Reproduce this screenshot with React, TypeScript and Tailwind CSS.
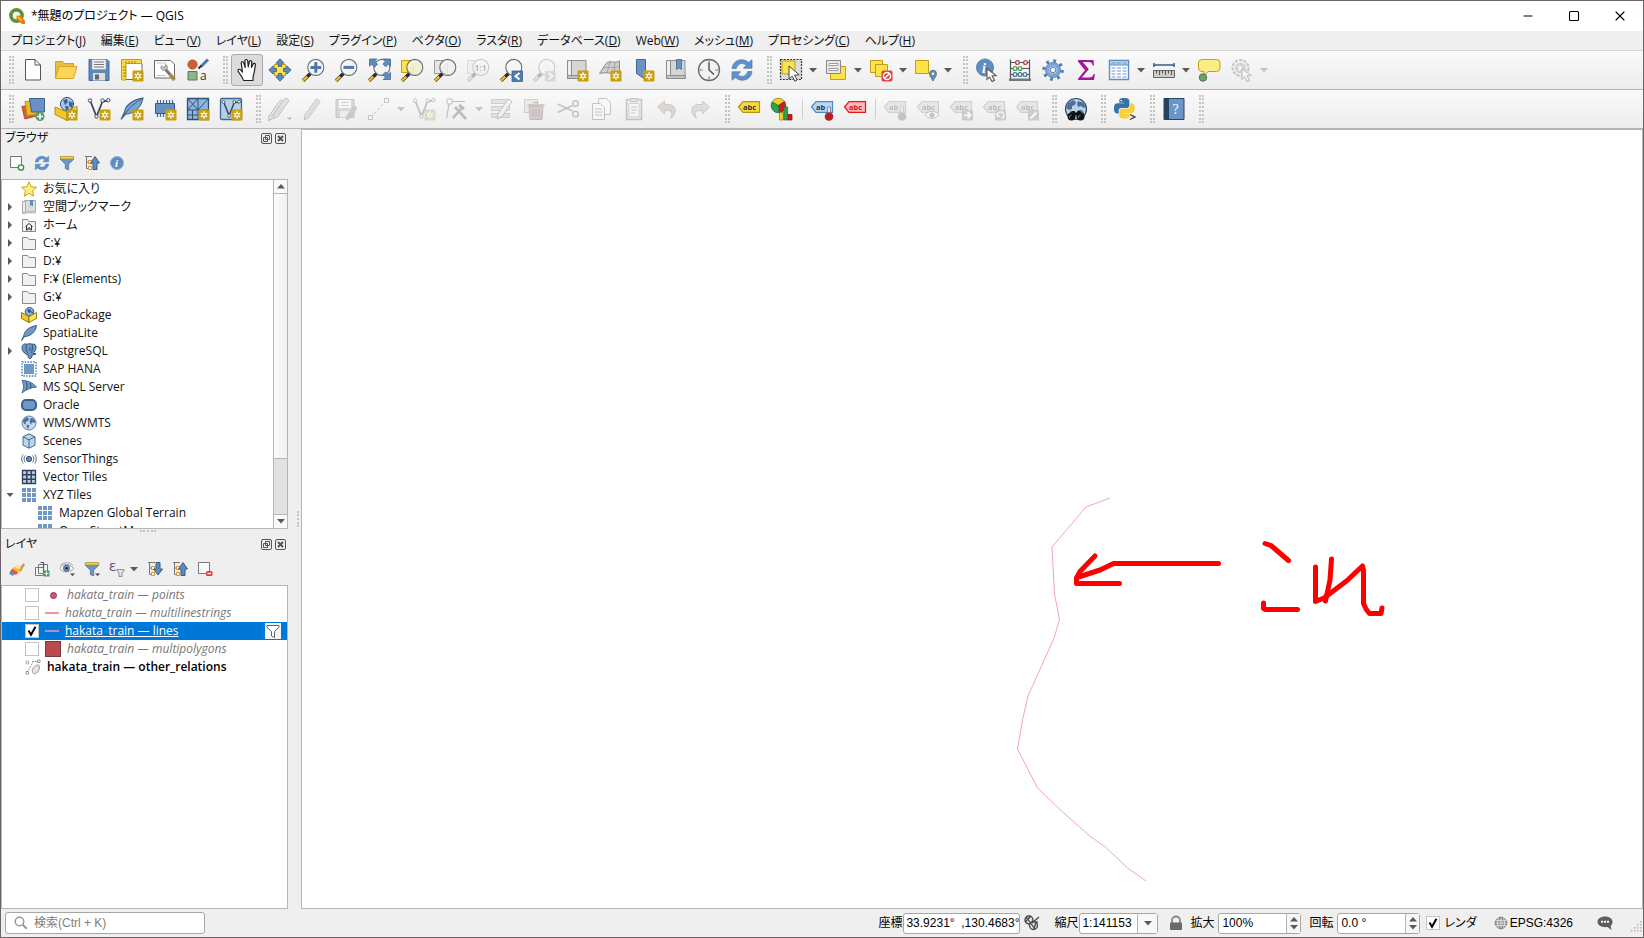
import { useState, type ReactNode } from "react";
import { Minus, Square, X } from "lucide-react";

const menus = [
  { text: "プロジェクト", key: "J" },
  { text: "編集", key: "E" },
  { text: "ビュー", key: "V" },
  { text: "レイヤ", key: "L" },
  { text: "設定", key: "S" },
  { text: "プラグイン", key: "P" },
  { text: "ベクタ", key: "O" },
  { text: "ラスタ", key: "R" },
  { text: "データベース", key: "D" },
  { text: "Web", key: "W" },
  { text: "メッシュ", key: "M" },
  { text: "プロセシング", key: "C" },
  { text: "ヘルプ", key: "H" },
];

/* ---------- shared icon parts ---------- */

function Svg({ children, size = 24 }: { children: ReactNode; size?: 16 | 24 }) {
  return (
    <svg
      viewBox={size === 24 ? "0 0 24 24" : "0 0 16 16"}
      className={size === 24 ? "size-6 shrink-0" : "size-4 shrink-0"}
      fill="none"
      aria-hidden="true"
    >
      {children}
    </svg>
  );
}

// Golden "new" badge in the bottom right corner
function NewBadge() {
  return (
    <g>
      <rect x="12.5" y="12.5" width="11" height="11" rx="1.2" fill="#c9a00c" />
      <path d="M18 14.3v7.4M14.8 16.1l6.4 3.8M21.2 16.1l-6.4 3.8" stroke="#fff" strokeWidth="1.4" />
      <circle cx="18" cy="18" r="1.1" fill="#c9a00c" />
    </g>
  );
}

function Lens({ children, tone = "#f2f4f4" }: { children?: ReactNode; tone?: string }) {
  return (
    <g>
      <path d="M9.5 15.5 2 22.8" stroke="#2b2b2b" strokeWidth="3.4" />
      <path d="M6.2 18.6 1.6 23" stroke="#f3bd33" strokeWidth="2.4" />
      <circle cx="14.8" cy="9.4" r="8" fill={tone} fillOpacity=".88" stroke="#6d6f6e" strokeWidth="1.1" />
      <path d="M9.2 9.4a5.6 5.6 0 0 1 5.6-5.6" stroke="#fff" strokeWidth="1.2" />
      {children}
    </g>
  );
}

function Refresh() {
  return (
    <g>
      <path d="M2 10.5C2.6 4.6 7.6 1.4 12.4 1.8c2.6.2 4.7 1.2 6.1 2.7L22 1.8v8.4h-8.6l2.8-2.9c-3.4-3-8.2-2.2-10 3.2z" fill="#5f92cd" stroke="#4778ad" strokeWidth=".7" />
      <path d="M22 13.5c-.6 5.9-5.6 9.1-10.4 8.7-2.6-.2-4.7-1.2-6.1-2.7L2 22.2v-8.4h8.6l-2.8 2.9c3.4 3 8.2 2.2 10-3.2z" fill="#5f92cd" stroke="#4778ad" strokeWidth=".7" />
    </g>
  );
}

function Cursor() {
  return <path d="M12 10.5v10.8l2.6-2.3 2.5 4.6 2.4-1.3-2.4-4.4 3.9-.3z" fill="#fff" stroke="#555" strokeWidth="1.1" />;
}

function Tag({ fill, stroke, text, color = "#333" }: { fill: string; stroke: string; text: string; color?: string }) {
  return (
    <g>
      <path d="M1.5 10 6 4.7h16.5v10.6H6z" fill={fill} stroke={stroke} strokeWidth="1.2" />
      <text x="6" y="12.6" fontSize="7.5" fontWeight="700" fontFamily="Open Sans, sans-serif" fill={color}>
        {text}
      </text>
    </g>
  );
}

function Globe() {
  return (
    <g>
      <circle cx="12" cy="12" r="10.5" fill="#b9d2ea" stroke="#2f4a66" strokeWidth="1.2" />
      <path d="M4 6.5 9 3l3 2-1 3-3 1v3l-3 1-2.6-2zM14 4l5 1.5 3 4.5-2 1-3-2-3 1-1-3zM6 14l4 1 1 3-2 4-3-3zM14 13l4 0 2 3-3 5-3-2z" fill="#4c7097" />
    </g>
  );
}

function VectorNodes({ stroke = "#3b4b5c" }: { stroke?: string }) {
  return (
    <g stroke={stroke}>
      <path d="m3.5 4.5 6 15 6-15 5.5-1" strokeWidth="1.8" />
      <circle cx="3" cy="3.5" r="1.7" fill="#fff" strokeWidth="1" />
      <circle cx="15.5" cy="3.5" r="1.7" fill="#fff" strokeWidth="1" />
      <circle cx="21.3" cy="3.2" r="1.7" fill="#fff" strokeWidth="1" />
      <circle cx="9.5" cy="19.5" r="1.7" fill="#fff" strokeWidth="1" />
    </g>
  );
}

function Feather() {
  return (
    <g>
      <path d="M23 1C13 2.5 5.5 8 4.5 15L1 22.5l4.3-5.2C14 16.5 21 11 23 1z" fill="#7ba4d0" stroke="#3d5d80" strokeWidth="1.1" />
      <path d="M2 21C8 11.500 15 5.500 23 1" stroke="#3d5d80" />
    </g>
  );
}

function Pencil() {
  return (
    <g>
      <path d="M4 18 15.500 1.800l3.700 2.600L7.700 20.600 3.300 22.700z" fill="#d8c99a" stroke="#444" strokeWidth="1" />
      <path d="m6 19.300 11.400-16.200" stroke="#8a8364" />
    </g>
  );
}

function GreyMap() {
  return (
    <g>
      <path d="M5.500 2.500H21v18H5.500z" fill="#d6d6d6" stroke="#8d8d8d" />
      <path d="M2.500 2.500h4v18h-4z" fill="#efefef" stroke="#8d8d8d" />
      <path d="M2.500 17.500h19v3h-19z" fill="#c3c3c3" stroke="#8d8d8d" />
    </g>
  );
}

function Ribbon() {
  return <path d="M5.500 1.500h9v20l-4.500-3-4.500-3z" fill="#6a94c4" stroke="#3f6690" />;
}

function Scissors() {
  return (
    <g stroke="#555" strokeWidth="1.500">
      <path d="m1.500 7 15 7M1.500 15.500l15-7" />
      <circle cx="19.500" cy="6.500" r="2.800" />
      <circle cx="19.500" cy="17" r="2.800" />
    </g>
  );
}

function Funnel16() {
  return (
    <g>
      <path d="M1.500 2h13v2.600L9.700 9v6l-3.400-1.500V9L1.500 4.600z" fill="#6c96c5" stroke="#50779f" strokeWidth=".8" />
      <path d="M1.300 1.500h13.400v2.400H1.300z" fill="#f6d93b" stroke="#a48d2a" strokeWidth=".6" />
    </g>
  );
}

function TreeArrow16({ down = false }: { down?: boolean }) {
  return (
    <g>
      <path d="M1 1.500h7M2.500 1.500v12h4M2.500 7h4" stroke="#777" />
      <path d="M4.500 5.500h3v3h-3zM4.500 11.500h3v3h-3z" fill="#fff" stroke="#e98b1d" />
      {down ? (
        <path d="M9 1.500h4V8h2.500L11 14 6.500 8H9z" fill="#5d8cc0" stroke="#385b82" />
      ) : (
        <path d="M9 14.500h4V8h2.500L11 1.500 6.500 8H9z" fill="#5d8cc0" stroke="#385b82" />
      )}
    </g>
  );
}

function Folder16() {
  return <path d="M1.500 2.500h5l1.500 2h6.500v10h-13z" fill="#f1f1f1" stroke="#8a8a8a" />;
}

function TileGrid16() {
  return (
    <path
      d="M1 1h4v4H1zM6 1h4v4H6zM11 1h4v4h-4zM1 6h4v4H1zM6 6h4v4H6zM11 6h4v4h-4zM1 11h4v4H1zM6 11h4v4H6zM11 11h4v4h-4z"
      fill="#6d98c8"
    />
  );
}

/* ---------- toolbars ---------- */

function Handle() {
  return (
    <span className="flex w-4 shrink-0 justify-center gap-px pl-1" aria-hidden="true">
      <span className="h-7 border-l-2 border-dotted border-[#c3c3c3]" />
      <span className="h-7 border-l-2 border-dotted border-[#c3c3c3]" />
    </span>
  );
}

function Divider() {
  return (
    <span className="flex w-[7px] shrink-0 justify-center">
      <span className="h-5 w-px bg-[#cfcfcf]" />
    </span>
  );
}

function Caret() {
  return (
    <svg viewBox="0 0 8 5" className="h-[5px] w-2 shrink-0" aria-hidden="true">
      <path d="M0 0h8L4 4.500z" fill="#5a5a5a" />
    </svg>
  );
}

interface ToolProps {
  label: string;
  children: ReactNode;
  menu?: boolean;
  off?: boolean;
  active?: boolean;
}

function Tool({ label, children, menu, off, active }: ToolProps) {
  return (
    <button
      type="button"
      title={label}
      aria-label={label}
      disabled={off}
      className={`mr-px flex h-8 shrink-0 items-center rounded-[3px] border pl-[3px] ${menu ? "w-11 gap-1.5" : "w-8"} ${
        active ? "border-[#a9a9a9] bg-[#dcdcdc]" : "border-transparent"
      } ${off ? "opacity-30 grayscale-[60%]" : ""}`}
    >
      <Svg>{children}</Svg>
      {menu && <Caret />}
    </button>
  );
}

function MainToolbar() {
  return (
    <div className="flex h-[39px] items-center overflow-hidden border-b border-[#b5b5b5] bg-linear-to-b from-[#fafafa] to-[#ededed]">
      <Handle />
      <Tool label="新規プロジェクト">
        <path d="M4.500 1.500h9.500l5.500 5.500v15h-15z" fill="#fff" stroke="#555" />
        <path d="M14 1.500V7h5.500" stroke="#555" />
      </Tool>
      <Tool label="開く">
        <path d="M1.500 20.500v-17h7l2 2h9v3" fill="#e6bf3c" stroke="#cda125" />
        <path d="m1.500 20.500 3.500-12h18l-3.500 12z" fill="#fcd456" stroke="#d6a92d" />
      </Tool>
      <Tool label="保存">
        <path d="M2 1.500h18l2 2v19H2z" fill="#5f89b8" stroke="#466b94" />
        <path d="M5 1.500h14v10H5z" fill="#f2f2f2" stroke="#8c9aa8" strokeWidth=".6" />
        <path d="M7 4h10M7 6.500h10M7 9h10" stroke="#777" />
        <path d="M6 15h12v7.500H6z" fill="#dedede" />
        <path d="M8 16.500h4v5H8z" fill="#666" />
      </Tool>
      <Tool label="新規プリントレイアウト">
        <path d="M5 1.500h12.500l4.500 4v16H5z" fill="#fff" stroke="#666" />
        <path d="M1.500 1.500h20v4H6v16.500H1.500z" fill="#f8d848" stroke="#c39d19" />
        <path d="M6 5.500V3M9 5.500V3M12 5.500V3M15 5.500V3M3 9h3M3 12h3M3 15h3M3 18h3" stroke="#8e7311" strokeWidth=".8" />
        <NewBadge />
      </Tool>
      <Tool label="レイアウトマネージャ">
        <path d="M1.500 2.500h16l4 3.500v14h-20z" fill="#fff" stroke="#666" />
        <path d="M3.500 5h10M3.500 17.500h9" stroke="#c4c4c4" />
        <path d="M17 16.500 21.500 22" stroke="#a98b46" strokeWidth="3.600" />
        <path d="m11 9.500 6 7" stroke="#777" strokeWidth="3" />
        <path d="M8 9.500c0 2.400 3 3.600 5 2.300 1.800-1.200 1.800-4-.3-5.300l-.7 2.700-2 .2-1.600-1.600z" fill="#ccc" stroke="#777" strokeWidth=".8" />
      </Tool>
      <Tool label="スタイルマネージャ">
        <circle cx="6.500" cy="6.500" r="4.600" fill="#d1603a" stroke="#a5431f" strokeWidth=".8" />
        <path d="M22 1.500 15 8.500" stroke="#4a78ab" strokeWidth="3" />
        <path d="M15.500 7.500 12.500 10.500" stroke="#2b2b2b" strokeWidth="2" />
        <path d="M2 13.500h9v8.500H2z" fill="#8fb58d" stroke="#4f7f4d" />
        <text x="14" y="22" fontSize="12" fontFamily="Open Sans, sans-serif" fill="#333">a</text>
      </Tool>
      <Handle />
      <Tool label="地図を移動" active>
        <path
          d="M8.500 22.500c-.5-2.500-2.500-5-4-7-.8-1.200-2.200-3-1.300-3.900 1-1 2.500.2 4.300 2.400L6.300 5.500c-.3-2 2-2.400 2.500-.6L10.200 9.500 9.900 3c0-2 2.500-2 2.800-.1l.6 6 1-5.300c.4-1.700 2.600-1.300 2.500.5L16.500 9.500l1.500-3.300c.7-1.600 2.800-.8 2.400 1-.7 3.300-1 7.300-2 10.300-.5 1.500-.4 3-.4 5z"
          fill="#fff"
          stroke="#222"
          strokeWidth="1.200"
          strokeLinejoin="round"
        />
      </Tool>
      <Tool label="選択部分に地図を移動">
        <path d="M6.500 6.500h11v11h-11z" fill="#fbe34b" stroke="#c39d19" />
        <path
          d="m12 .800 4.200 4.400h-2.600v3.300h-3.200V5.200H7.800zM12 23.200l4.200-4.400h-2.600v-3.300h-3.200v3.300H7.800zM.800 12l4.400-4.200v2.600h3.300v3.200H5.200v2.600zM23.200 12l-4.400-4.200v2.600h-3.300v3.200h3.300v2.600z"
          fill="#5d8cc0"
          stroke="#385b82"
          strokeWidth=".8"
        />
      </Tool>
      <Tool label="拡大">
        <Lens><path d="M14.800 4v10.800M9.400 9.400h10.800" stroke="#4b79ae" strokeWidth="3" /></Lens>
      </Tool>
      <Tool label="縮小">
        <Lens><path d="M9.400 9.400h10.800" stroke="#4b79ae" strokeWidth="3" /></Lens>
      </Tool>
      <Tool label="全域表示">
        <Lens />
        <path
          d="M2.500 1h7.300L7.600 3.200l3 3-3 3-3-3-2.100 2.100zM23.500 1v7.300l-2.200-2.200-2.600 2.600-2.800-2.800 2.600-2.600L16.200 1zM23.500 21.500h-7.300l2.200-2.200-2.600-2.600 2.800-2.800 2.600 2.600 2.300-2.200z"
          fill="#5d8cc0"
          stroke="#385b82"
          strokeWidth=".7"
        />
      </Tool>
      <Tool label="選択部分にズーム">
        <path d="M1.500 2.500h12v12h-12z" fill="#fbe34b" stroke="#c39d19" />
        <Lens tone="#f3eed2" />
      </Tool>
      <Tool label="レイヤの領域にズーム">
        <path d="M1.500 2.500h13v13h-13z" fill="#e6e6e6" stroke="#9a9a9a" />
        <Lens tone="#eee" />
      </Tool>
      <Tool label="ネイティブ解像度にズーム" off>
        <path d="M1.500 2.500h13v13h-13z" fill="#e6e6e6" stroke="#9a9a9a" />
        <Lens>
          <text x="8.500" y="12.500" fontSize="8.500" fontWeight="700" fontFamily="Open Sans, sans-serif" fill="#333">1:1</text>
        </Lens>
      </Tool>
      <Tool label="直前の表示領域にズーム">
        <Lens />
        <path d="M13 13h10.500v10.500H13z" fill="#4f7db1" stroke="#34587f" strokeWidth=".7" />
        <path d="m20.500 15-4 3.200 4 3.200" stroke="#fff" strokeWidth="2" />
      </Tool>
      <Tool label="次の表示領域にズーム" off>
        <Lens />
        <path d="M13 13h10.500v10.500H13z" fill="#9b9b9b" />
        <path d="m16.500 15 4 3.200-4 3.200" stroke="#fff" strokeWidth="2" />
      </Tool>
      <Tool label="新規地図ビュー"><GreyMap /><NewBadge /></Tool>
      <Tool label="新規3D地図ビュー">
        <path d="M1.500 15.500 8.500 5c4-3 8 1 13-2v12c-5 3-10-2-20 .5z" fill="#cfcfcf" stroke="#8d8d8d" />
        <path d="M5 10.500c5-3 10 1 16-2M12 3.700 9 15M17 4.500l-1 11" stroke="#999" strokeWidth=".8" />
        <NewBadge />
      </Tool>
      <Tool label="新規空間ブックマーク"><Ribbon /><NewBadge /></Tool>
      <Tool label="空間ブックマークを表示">
        <GreyMap />
        <path d="M12.500 1.500h5v10L15 9.800l-2.500 1.700z" fill="#6a94c4" stroke="#3f6690" strokeWidth=".8" />
      </Tool>
      <Tool label="時系列コントローラ">
        <circle cx="12" cy="12" r="10.500" fill="#f2f2f2" stroke="#6b6b6b" strokeWidth="1.300" />
        <path d="M12 2.500v3M12 18.500v3M2.500 12h3M18.500 12h3" stroke="#6b6b6b" />
        <path d="M12 5v7l5 4.500" stroke="#4d4d4d" strokeWidth="1.400" />
      </Tool>
      <Tool label="再読み込み"><Refresh /></Tool>
      <Handle />
      <Tool label="地物を選択" menu>
        <path d="M1.500 1.500h21v20h-21z" fill="#dcdcdc" stroke="#333" strokeDasharray="2 1.200" strokeWidth="1.200" />
        <path d="M3 3h13v13H3z" fill="#fbe34b" stroke="#c39d19" />
        <path d="M10 8v13l3.200-2.800 2.600 5 2.300-1.200-2.500-4.800 4.600-.4z" fill="#fff" stroke="#444" />
      </Tool>
      <Tool label="値で地物を選択" menu>
        <path d="M6.500 8.500h15v13h-15z" fill="#fbe34b" stroke="#c39d19" />
        <path d="M2.500 2.500h14v13h-14z" fill="#e9e9e9" stroke="#888" />
        <path d="M5 5.500h9v2H5zM5 10.500h9v2H5z" fill="#fff" stroke="#888" strokeWidth=".8" />
      </Tool>
      <Tool label="選択解除" menu>
        <path d="M1.500 2.500h12v12h-12z" fill="#fbe34b" stroke="#c39d19" />
        <path d="M6.500 6.500h12v12h-12z" fill="#fbe34b" stroke="#c39d19" />
        <rect x="12.500" y="12.500" width="11" height="11" rx="2" fill="#dc4141" />
        <circle cx="18" cy="18" r="3.600" stroke="#fff" strokeWidth="1.500" />
        <path d="m15.500 20.500 5-5" stroke="#fff" strokeWidth="1.500" />
      </Tool>
      <Tool label="場所で選択" menu>
        <path d="M1.500 2.500h13v13h-13z" fill="#fbe34b" stroke="#c39d19" />
        <path d="M19 23c-2-3.500-3.500-5-3.500-7.300a3.500 3.500 0 0 1 7 0C22.500 18 21 19.500 19 23z" fill="#6b8ea6" stroke="#4d6c82" strokeWidth=".8" />
        <circle cx="19" cy="15.700" r="1.200" fill="#fff" />
      </Tool>
      <Handle />
      <Tool label="地物情報表示">
        <circle cx="10" cy="9.500" r="8.600" fill="#5f8dc2" stroke="#486f9c" strokeWidth=".7" />
        <text x="7" y="14.500" fontSize="14" fontStyle="italic" fontWeight="700" fontFamily="Liberation Serif, serif" fill="#fff">i</text>
        <Cursor />
      </Tool>
      <Tool label="フィールド計算機">
        <path d="M2.500 21V1.500M21.500 21V1.500M2.500 4.500h19M2.500 10.500h19M2.500 16.500h19" stroke="#555" strokeWidth="1.200" />
        <path d="M1 20.500h22v2.500H1z" fill="#777" />
        <g fill="#fff" strokeWidth="1.300">
          <g stroke="#c33b3b"><circle cx="9.500" cy="4.500" r="1.900" /><circle cx="17.500" cy="4.500" r="1.900" /></g>
          <g stroke="#4da05a"><circle cx="7" cy="10.500" r="1.900" /><circle cx="12" cy="10.500" r="1.900" /></g>
          <g stroke="#45799c"><circle cx="7" cy="16.500" r="1.900" /><circle cx="12" cy="16.500" r="1.900" /><circle cx="17" cy="16.500" r="1.900" /></g>
        </g>
      </Tool>
      <Tool label="ツールボックス">
        <circle cx="12" cy="12" r="8.800" stroke="#527fb3" strokeWidth="4" strokeDasharray="2.700 4.210" />
        <circle cx="12" cy="12" r="5.600" stroke="#7fa7d6" strokeWidth="4" />
        <circle cx="12" cy="12" r="7.500" stroke="#527fb3" strokeWidth=".8" />
        <circle cx="12" cy="12" r="2.800" fill="#f4f4f4" stroke="#527fb3" />
      </Tool>
      <Tool label="統計サマリ">
        <path d="M4 2h15.500l.5 5.500h-1.200C18.300 5 17 4 14.500 4H8.800l6 7.300-7 8.200h7.500c2.500 0 3.800-1.300 4.400-3.500h1.200L20 22H4v-1.300l7-8.500L4 3.500z" fill="#a3179c" />
      </Tool>
      <Tool label="属性テーブル" menu>
        <path d="M2.500 2.500h19v19h-19z" fill="#fff" stroke="#5d8cc0" strokeWidth="1.400" />
        <path d="M3 3h18v4H3z" fill="#a9d3ea" />
        <path d="M2.500 7h19" stroke="#5d8cc0" />
        <path d="M4.500 5h4M10 5h4M15.500 5h4M4.500 10h4M10 10h4M15.500 10h4M4.500 13h4M10 13h4M15.500 13h4M4.500 16h4M10 16h4M15.500 16h4M4.500 19h4M10 19h4M15.500 19h4" stroke="#6f9ac8" />
      </Tool>
      <Tool label="計測" menu>
        <path d="M2 7h20M2 5v4M22 5v4" stroke="#375d86" strokeWidth="1.500" />
        <path d="M1.500 12.500h21v7h-21z" fill="#cdcdcd" stroke="#666" />
        <path d="M4.500 12.500v3M7.500 12.500v4.500M10.500 12.500v3M13.500 12.500v4.500M16.500 12.500v3M19.500 12.500v4.500" stroke="#555" />
      </Tool>
      <Tool label="地図のヒント">
        <path d="M5 1.500h14.500a3.500 3.500 0 0 1 3.500 3.500v5a3.500 3.500 0 0 1-3.500 3.500H11l-4 5v-5H5A3.500 3.500 0 0 1 1.500 10V5A3.500 3.500 0 0 1 5 1.500z" fill="#fcec86" stroke="#c2a013" />
        <circle cx="6" cy="19.500" r="3.700" fill="#69a368" stroke="#4c6f4b" />
      </Tool>
      <Tool label="地物アクションの実行" menu off>
        <circle cx="10.500" cy="10" r="8" fill="#eee" stroke="#555" strokeWidth="2" strokeDasharray="3.200 1.300" />
        <circle cx="10.500" cy="10" r="5.500" fill="#888" />
        <path d="m8.500 7 5 3-5 3z" fill="#fff" />
        <Cursor />
      </Tool>
    </div>
  );
}

function DataToolbar() {
  return (
    <div className="flex h-[39px] items-center overflow-hidden border-b border-[#b5b5b5] bg-linear-to-b from-[#fafafa] to-[#ededed]">
      <Handle />
      <Tool label="データソースマネージャ">
        <path d="m.800 9.500 13-2.500 2 12-12 3z" fill="#d0603a" stroke="#9c4426" strokeWidth=".8" />
        <path d="m4 4.500 12-1 1 14-11 1z" fill="#f1b71f" stroke="#b98809" strokeWidth=".8" />
        <path d="M8.500 1.500h15v13.500h-13z" fill="#6692c6" stroke="#3d618b" />
        <circle cx="19" cy="19.500" r="4.500" fill="#4f9a62" />
        <path d="M19 16.500v6M16 19.500h6" stroke="#fff" strokeWidth="1.700" />
      </Tool>
      <Tool label="新規GeoPackageレイヤ">
        <circle cx="13" cy="7" r="6.600" fill="#a9c6e4" stroke="#34567c" />
        <path d="M9 3l4-1 1 3-3 3zM15 4l4 2-1 5-3-2zM11 9l3 0 1 4h-3z" fill="#3f648e" />
        <path d="m1 10 12 5v8.500L1 17.500z" fill="#f2c827" stroke="#9b7c0b" strokeWidth=".8" />
        <path d="m13 15 10-6v8l-10 6.500z" fill="#fbe34b" stroke="#9b7c0b" strokeWidth=".8" />
        <NewBadge />
      </Tool>
      <Tool label="新規シェープファイルレイヤ"><VectorNodes /><NewBadge /></Tool>
      <Tool label="新規SpatiaLiteレイヤ"><Feather /><NewBadge /></Tool>
      <Tool label="新規一時スクラッチレイヤ">
        <path d="M4.500 3v17M7.500 3v17M10.500 3v17M13.500 3v17M16.500 3v17M19.500 3v17" stroke="#41688f" strokeWidth="1.200" />
        <path d="M2.500 6.500h19v10h-19z" fill="#6592c5" stroke="#34587f" />
        <NewBadge />
      </Tool>
      <Tool label="新規メッシュレイヤ">
        <path d="M1.500 1.500h21v21h-21z" fill="#8db5e0" stroke="#2f5074" strokeWidth="1.300" />
        <path d="M1.500 13h21M12 1.500v21M1.500 1.500 12 13M12 1.500 1.500 13M12 13 22.500 1.500M6.500 13v9.500M1.500 18H12" stroke="#2f5074" />
        <NewBadge />
      </Tool>
      <Tool label="新規仮想レイヤ">
        <rect x="1.500" y="1.500" width="21" height="21" rx="1.500" fill="#b7d0ea" stroke="#41668e" strokeWidth="1.300" />
        <g transform="translate(2 2) scale(.85)"><VectorNodes /></g>
        <NewBadge />
      </Tool>
      <Handle />
      <Tool label="現在の編集" off>
        <g transform="translate(-3 1)"><Pencil /></g>
        <g transform="translate(2 -1)"><Pencil /></g>
        <path d="M19 20.500h5L21.500 23z" fill="#333" />
      </Tool>
      <Tool label="編集モード切替" off><Pencil /></Tool>
      <Tool label="レイヤ編集内容を保存" off>
        <path d="M2 2.500h18v18H2z" fill="#999" stroke="#555" />
        <path d="M5 3h12v8H5z" fill="#fff" />
        <path d="M7 5.500h8M7 8.500h8" stroke="#777" />
        <path d="M6 14h10v6.500H6z" fill="#ddd" />
        <path d="m13 19 7-10 3 2-7 10-3.500 2z" fill="#b25f4a" stroke="#555" strokeWidth=".8" />
      </Tool>
      <Tool label="線のデジタイズ" menu off>
        <path d="m3.500 20.500 16-17" stroke="#555" strokeDasharray="3 2" />
        <path d="M1.500 18.500h4v4h-4zM17.500 1.500h4v4h-4z" fill="#fff" stroke="#555" />
      </Tool>
      <Tool label="線地物を追加" off><VectorNodes /><NewBadge /></Tool>
      <Tool label="頂点ツール" menu off>
        <path d="m4.500 4.500-3 17M4.500 4.500H20" stroke="#444" strokeWidth="1.200" />
        <path d="M2 2h5v5H2z" fill="#fff" stroke="#444" />
        <path d="m8 21 9-10M10 10l11 12" stroke="#444" strokeWidth="2.600" />
        <path d="m14 8 5 4" stroke="#444" strokeWidth="3" />
      </Tool>
      <Tool label="属性を変更" off>
        <path d="M1.500 2.500h18v4h-18zM1.500 9.500h18v4h-18zM1.500 16.500h18v4h-18z" fill="#bdc09a" stroke="#777" />
        <path d="m8 17 10-15 4 2.500-10 15-4.500 2.500z" fill="#eee" stroke="#444" />
      </Tool>
      <Tool label="選択物の削除" off>
        <path d="M1.500 2.500h13v13h-13z" fill="#ddd3a0" stroke="#777" />
        <path d="M6 9.500h14l-1 13H7z" fill="#c96b6b" stroke="#8c2f2f" />
        <path d="M4.500 8h17M10.500 5.500h5M10 12v8M13 12v8M16 12v8" stroke="#8c2f2f" strokeWidth="1.300" />
      </Tool>
      <Tool label="切り取り" off><Scissors /></Tool>
      <Tool label="コピー" off>
        <path d="M9.500 1.500h8l4 4v12h-12z" fill="#fff" stroke="#555" />
        <path d="M3.500 6.500h8l4 4v12h-12z" fill="#fff" stroke="#555" />
        <path d="M6 12h7M6 15h7M6 18h7" stroke="#555" />
      </Tool>
      <Tool label="貼り付け" off>
        <path d="M4.500 2.500h15v20h-15z" fill="#ddd" stroke="#555" strokeWidth="1.500" />
        <path d="M7 6.500h10V20H7z" fill="#fff" stroke="#666" strokeWidth=".8" />
        <path d="M8.500 1.500h7v3h-7z" fill="#bbb" stroke="#555" />
        <path d="M9 10h6M9 13h6M9 16h4" stroke="#555" />
      </Tool>
      <Tool label="元に戻す" off>
        <path d="m2.500 10 7-6v3.500h4c8 0 9 9 2 14 2.500-5 1.500-8-3-8h-3V17z" fill="#c18f74" stroke="#865d46" />
      </Tool>
      <Tool label="やり直す" off>
        <path d="m21.500 10-7-6v3.500h-4c-8 0-9 9-2 14-2.500-5-1.500-8 3-8h3V17z" fill="#99b49d" stroke="#5b705e" />
      </Tool>
      <Handle />
      <Tool label="レイヤのラベルオプション"><Tag fill="#f9da3c" stroke="#b8930f" text="abc" /></Tool>
      <Tool label="ダイアグラムオプション">
        <path d="M8.500 8.500 2 5a7.300 7.300 0 0 1 12.500-.5z" fill="#f5d02b" stroke="#8f760a" strokeWidth=".7" />
        <path d="M8.500 8.500 14.500 4.500a7.300 7.300 0 0 1-5.500 11.300z" fill="#cd1c1c" stroke="#7d0f0f" strokeWidth=".7" />
        <path d="M8.500 8.500 9 15.800A7.300 7.300 0 0 1 2 5z" fill="#2fa34f" stroke="#186b2e" strokeWidth=".7" />
        <path d="M9.500 15.500h3.800v7.500H9.500z" fill="#f5d02b" stroke="#8f760a" strokeWidth=".7" />
        <path d="M13.800 10h3.800v13h-3.800z" fill="#2fa34f" stroke="#186b2e" strokeWidth=".7" />
        <path d="M18 17.500h4V23h-4z" fill="#cd1c1c" stroke="#7d0f0f" strokeWidth=".7" />
      </Tool>
      <Divider />
      <Tool label="ラベルのピン留め表示">
        <Tag fill="#b8d8f7" stroke="#4b86c9" text="ab" />
        <path d="M17.500 10h3v9h-3z" fill="#dfe7ef" stroke="#687a8c" strokeWidth=".8" />
        <circle cx="19" cy="19.500" r="4.300" fill="#b42020" />
      </Tool>
      <Tool label="未配置ラベルの表示切替"><Tag fill="#ffb9b9" stroke="#e51616" text="abc" color="#d31212" /></Tool>
      <Divider />
      <Tool label="ラベルのピン留め" off>
        <Tag fill="#cfcaa8" stroke="#888366" text="ab" />
        <path d="M17.500 9h3v9h-3z" fill="#ddd" stroke="#777" />
        <circle cx="19" cy="19.500" r="4.300" fill="#8d5252" />
      </Tool>
      <Tool label="ラベルの表示非表示" off>
        <Tag fill="#cfcaa8" stroke="#888366" text="abc" />
        <path d="M9 18c4-5 10-5 14 0-4 4.500-10 4.500-14 0z" fill="#fff" stroke="#555" />
        <circle cx="16" cy="18" r="2.500" fill="#555" />
      </Tool>
      <Tool label="ラベルの移動" off>
        <Tag fill="#cfcaa8" stroke="#888366" text="abc" />
        <path d="M13 13h11v10.500H13z" fill="#777" />
        <path d="M15 18.200h6M18.500 15l3 3.200-3 3.200" stroke="#fff" strokeWidth="2" />
      </Tool>
      <Tool label="ラベルの回転" off>
        <Tag fill="#cfcaa8" stroke="#888366" text="abc" />
        <path d="M13 13h11v10.500H13z" fill="#777" />
        <path d="M15.500 19a3.200 3.200 0 1 1 4 2.300M14.500 16.500l1 3 3-1" stroke="#fff" strokeWidth="1.500" />
      </Tool>
      <Tool label="ラベルの変更" off>
        <Tag fill="#cfcaa8" stroke="#888366" text="abc" />
        <path d="M13 13h11v10.500H13z" fill="#777" />
        <path d="m15.500 21.500 6-6" stroke="#fff" strokeWidth="2.400" />
      </Tool>
      <Handle />
      <Tool label="メタサーチ">
        <Globe />
        <path d="M5 18.500 8 14h2.500l1.500 2 1.500-2H16l3 4.500z" fill="#111" />
        <circle cx="7.500" cy="19.500" r="4" fill="#111" />
        <circle cx="16.500" cy="19.500" r="4" fill="#111" />
        <path d="M5.500 21a2.500 2.500 0 0 1 2-3M14.500 21a2.500 2.500 0 0 1 2-3" stroke="#888" strokeWidth=".9" />
      </Tool>
      <Handle />
      <Tool label="Pythonコンソール">
        <g transform="translate(1 1) scale(.86)">
          <path
            d="M14.250.180l.9.200.730.260.590.300.450.320.340.340.250.340.160.330.100.300.040.260.020.200-.010.130V8.500l-.050.630-.130.550-.210.460-.260.380-.300.310-.330.250-.350.190-.350.140-.330.100-.300.070-.260.040-.210.020H8.770l-.690.050-.590.140-.500.220-.410.270-.330.320-.270.350-.200.360-.150.370-.100.350-.070.320-.040.270-.020.210v3.060H3.170l-.210-.030-.280-.070-.320-.120-.350-.180-.360-.260-.360-.360-.350-.460-.320-.590-.280-.730-.210-.880-.140-1.050-.050-1.230.060-1.220.160-1.040.240-.870.320-.710.360-.570.400-.440.420-.330.420-.240.400-.160.360-.100.320-.050.240-.010h.160l.060.010h8.160v-.830H6.180l-.010-2.750-.020-.370.050-.340.110-.310.170-.280.250-.260.310-.230.380-.200.440-.180.510-.150.580-.120.640-.100.710-.060.770-.040.840-.020 1.270.050z"
            fill="#3572a5"
          />
          <path
            d="M21.040 6.110l.280.060.320.120.350.180.360.270.360.350.350.470.320.590.280.730.210.880.140 1.040.050 1.230-.060 1.230-.160 1.040-.240.860-.320.710-.360.570-.400.450-.420.330-.420.240-.400.160-.360.090-.320.050-.240.020-.160-.010h-8.220v.820h5.840l.010 2.760.020.360-.050.340-.110.310-.170.290-.250.250-.310.240-.380.200-.440.170-.510.150-.580.130-.640.090-.710.070-.770.040-.840.010-1.270-.040-1.070-.140-.900-.200-.730-.250-.590-.300-.450-.330-.340-.340-.250-.340-.160-.330-.100-.300-.040-.250-.020-.200.010-.130v-5.340l.050-.640.130-.540.210-.460.260-.380.300-.320.330-.240.350-.200.350-.140.330-.100.300-.060.260-.040.210-.020.130-.010h5.840l.690-.050.590-.140.500-.210.410-.280.330-.320.270-.350.200-.360.150-.360.100-.350.070-.320.040-.280.020-.210V6.070h2.090z"
            fill="#fbcf3b"
          />
          <circle cx="8.500" cy="2.900" r="1" fill="#fff" />
        </g>
        <path d="m17 17.500 5 2.500-5 2.500" stroke="#333" strokeWidth="1.300" />
      </Tool>
      <Handle />
      <Tool label="ヘルプ">
        <path d="M2 1.500h20v21H2z" fill="#6a95c7" stroke="#2a4363" />
        <path d="M2 1.500h5v21H2z" fill="#27415f" />
        <text x="10.500" y="17" fontSize="14" fontFamily="Liberation Serif, serif" fill="#fff">?</text>
      </Tool>
      <Handle />
    </div>
  );
}

/* ---------- docks ---------- */

function DockTitle({ text }: { text: string }) {
  return (
    <div className="flex h-[18px] items-center gap-[3px] pr-2 pl-1">
      <h2 className="flex-1">{text}</h2>
      <button type="button" aria-label={`${text}を分離`}>
        <svg viewBox="0 0 11 11" className="size-[11px]" fill="none" stroke="#555">
          <rect x=".5" y=".5" width="10" height="10" rx="1.500" />
          <path d="M4.500 2.500h4v4h-4zM2.500 4.500h4v4h-4z" />
        </svg>
      </button>
      <button type="button" aria-label={`${text}を閉じる`}>
        <svg viewBox="0 0 11 11" className="size-[11px]" fill="none" stroke="#555">
          <rect x=".5" y=".5" width="10" height="10" rx="1.500" />
          <path d="m3 3 5 5M8 3 3 8" strokeWidth="2" />
        </svg>
      </button>
    </div>
  );
}

function SmallTool({ label, children, menu }: { label: string; children: ReactNode; menu?: boolean }) {
  return (
    <button type="button" title={label} aria-label={label} className={`flex items-center ${menu ? "w-[29px] gap-[5px]" : "w-4"}`}>
      <Svg size={16}>{children}</Svg>
      {menu && <Caret />}
    </button>
  );
}

interface BrowserItem {
  name: string;
  icon: ReactNode;
  state?: "open" | "closed";
  child?: boolean;
}

const browserItems: BrowserItem[] = [
  {
    name: "お気に入り",
    icon: <path d="m8 .800 2.200 4.900 5.300.6-4 3.500 1.200 5.400L8 12.400l-4.700 2.800 1.200-5.400-4-3.500 5.300-.6z" fill="#fdf07a" stroke="#c8a21a" />,
  },
  {
    name: "空間ブックマーク",
    state: "closed",
    icon: (
      <>
        <path d="M3.500 1.500h11v11h-11z" fill="#dcdcdc" stroke="#aaa" />
        <path d="M1.500 2.500h3v12h-3z" fill="#eee" stroke="#aaa" />
        <path d="M2 12.500h13v2H2z" fill="#c6c6c6" />
        <path d="M9 1h3v6.500L10.500 6 9 7.500z" fill="#5d8cc0" />
      </>
    ),
  },
  {
    name: "ホーム",
    state: "closed",
    icon: (
      <>
        <Folder16 />
        <path d="m4.500 9.500 3.500-3 3.500 3M5.500 9v4H7v-2h2v2h1.500V9" stroke="#333" />
      </>
    ),
  },
  { name: "C:¥", state: "closed", icon: <Folder16 /> },
  { name: "D:¥", state: "closed", icon: <Folder16 /> },
  { name: "F:¥ (Elements)", state: "closed", icon: <Folder16 /> },
  { name: "G:¥", state: "closed", icon: <Folder16 /> },
  {
    name: "GeoPackage",
    icon: (
      <>
        <circle cx="8.500" cy="4.800" r="4.300" fill="#8fb1d6" stroke="#34567c" />
        <path d="m.500 5.500 7.500 4v6l-7.500-4z" fill="#f2c827" stroke="#7c640b" strokeWidth=".8" />
        <path d="m8 9.500 7.500-4v6L8 15.500z" fill="#fbe34b" stroke="#7c640b" strokeWidth=".8" />
        <path d="m6 3 3-1 1 3-2 1zM10 4l2 1-1 2z" fill="#2f5074" />
      </>
    ),
  },
  {
    name: "SpatiaLite",
    icon: <path d="M15.500.500C9 1.500 3.500 5.500 3 10L.500 15.500l3-3.800C9.500 11 14.500 7.500 15.500.500z" fill="#6d98c8" stroke="#3d5d80" />,
  },
  {
    name: "PostgreSQL",
    state: "closed",
    icon: (
      <>
        <path d="M1 4.500C1 1 4 .500 6 1.300c2-.8 4-.8 5 0 2.500-.8 4.500.5 4 3.500-.4 2.500-1.500 4.500-3 5.500l3 .4c-.8 1-2.500 1.200-3.800.8-.3 1.500-.2 4-2.200 4-2 0-2-2-2-4-1.500.5-2 .2-2.500-1C2.500 10 1 7 1 4.500z" fill="#6d98c8" stroke="#2f5074" />
        <path d="M5.500 2C4.500 4 5 8 7 10M11 2c1 2 .5 6-1 8M9 4v4" stroke="#2f5074" strokeWidth=".9" />
      </>
    ),
  },
  {
    name: "SAP HANA",
    icon: (
      <>
        <path d="M3 3h10v10H3z" fill="#6d98c8" />
        <path d="M1 1h14v14H1z" stroke="#456a94" strokeWidth="1.400" strokeDasharray="1.400 1.400" />
      </>
    ),
  },
  {
    name: "MS SQL Server",
    icon: (
      <>
        <path d="M1 1.500c5-.5 11 2.500 14.500 6.500C10 8.500 5 10.500 1 14c2-4.500 2-8.500 0-12.500z" fill="#6d98c8" stroke="#3c618a" strokeWidth=".9" />
        <path d="M5 2.500c1.500 3 1.500 6 0 8.500M9 4c1 2 1 4 .3 5.300" stroke="#2f5074" />
      </>
    ),
  },
  { name: "Oracle", icon: <rect x="1" y="3" width="14" height="10" rx="4" fill="#6d98c8" stroke="#3c618a" strokeWidth="2" /> },
  {
    name: "WMS/WMTS",
    icon: (
      <>
        <circle cx="8" cy="8" r="7" fill="#c5d9ee" stroke="#5b83ae" />
        <path d="m3 4 3-2 2 1.500L7 6 4.500 7 5 9.500 3.500 9 1.800 6.500zM9.500 3l3 .5 2 3.500-1.500 1-2-1-1 3-1.500-3zM6 9.500l2.500 1L7 14l-1.500-2z" fill="#4c7097" />
      </>
    ),
  },
  {
    name: "Scenes",
    icon: (
      <>
        <path d="m8 .800 6 3v8.400l-6 3-6-3V3.800z" fill="#bcd4ec" stroke="#44698f" />
        <path d="m2 3.800 6 3 6-3M8 6.800v8.400" stroke="#44698f" />
      </>
    ),
  },
  {
    name: "SensorThings",
    icon: (
      <>
        <circle cx="8" cy="8" r="2.600" fill="#5d8cc0" stroke="#2f4a66" />
        <path d="M4.500 4.500a5 5 0 0 0 0 7M11.500 4.500a5 5 0 0 1 0 7M2.200 3.500c-2 2.800-2 6.200 0 9M13.800 3.500c2 2.800 2 6.200 0 9" stroke="#5b6d80" />
      </>
    ),
  },
  {
    name: "Vector Tiles",
    icon: (
      <>
        <path d="M1.500 1.500h13v13h-13z" fill="#b7cfe8" stroke="#2e4156" strokeWidth="1.300" />
        <path d="M5.800 1.500v13M10.200 1.500v13M1.500 5.800h13M1.500 10.200h13" stroke="#2e4156" strokeWidth="1.500" />
      </>
    ),
  },
  { name: "XYZ Tiles", state: "open", icon: <TileGrid16 /> },
  { name: "Mapzen Global Terrain", child: true, icon: <TileGrid16 /> },
  { name: "OpenStreetMap", child: true, icon: <TileGrid16 /> },
];

function BrowserDock() {
  return (
    <section className="flex h-[400px] shrink-0 flex-col">
      <DockTitle text="ブラウザ" />
      <div className="flex h-8 shrink-0 items-center gap-[9px] pl-2">
        <SmallTool label="選択レイヤを追加">
          <path d="M1.500 1.500h11v11h-11z" fill="#fbfbfb" stroke="#777" />
          <circle cx="12" cy="12.500" r="2.700" fill="#eef5ee" stroke="#3f8b4e" strokeWidth="1.300" />
        </SmallTool>
        <SmallTool label="再読み込み"><g transform="scale(.667)"><Refresh /></g></SmallTool>
        <SmallTool label="ブラウザをフィルタ"><Funnel16 /></SmallTool>
        <SmallTool label="すべて折りたたむ"><TreeArrow16 /></SmallTool>
        <SmallTool label="プロパティ">
          <circle cx="8" cy="8" r="6.500" fill="#5f8dc2" stroke="#8fb1d6" />
          <text x="6" y="12" fontSize="11" fontStyle="italic" fontWeight="700" fontFamily="Liberation Serif, serif" fill="#fff">i</text>
        </SmallTool>
      </div>
      <div className="mr-1.5 flex min-h-0 flex-1 border border-[#b5b5b5] bg-white">
        <ul className="min-w-0 flex-1 overflow-hidden">
          {browserItems.map((item) => (
            <li key={item.name} className={`flex h-[18px] items-center ${item.child ? "pl-4" : ""}`}>
              <span className="mr-[3px] flex w-4 justify-center">
                {item.state && (
                  <button type="button" aria-label={item.name} aria-expanded={item.state === "open"}>
                    <svg viewBox="0 0 8 8" className="size-2" fill="#595959">
                      <path d={item.state === "open" ? "M.500 2h7L4 6z" : "M2 0v8l4-4z"} />
                    </svg>
                  </button>
                )}
              </span>
              <Svg size={16}>{item.icon}</Svg>
              <span className="ml-1.5 whitespace-nowrap">{item.name}</span>
            </li>
          ))}
        </ul>
        {/* Scrollbar */}
        <div className="flex w-[14px] flex-col border-l border-[#b5b5b5] bg-[#e2e2e2]">
          <button type="button" aria-label="上へ" className="flex h-[14px] items-center justify-center border-b border-[#b5b5b5] bg-[#fafafa]">
            <svg viewBox="0 0 8 5" className="h-[5px] w-2"><path d="M0 4.500h8L4 0z" fill="#5a5a5a" /></svg>
          </button>
          <div className="h-[265px] border-b border-[#b5b5b5] bg-linear-to-r from-[#fcfcfc] to-[#f0f0f0]" />
          <button type="button" aria-label="下へ" className="mt-auto flex h-[14px] items-center justify-center border-t border-[#b5b5b5] bg-[#fafafa]">
            <Caret />
          </button>
        </div>
      </div>
    </section>
  );
}

function Tick({ checked, onChange, id, label }: { checked: boolean; onChange: (v: boolean) => void; id: string; label?: string }) {
  return (
    <span className="grid shrink-0">
      <input
        id={id}
        type="checkbox"
        aria-label={label}
        checked={checked}
        onChange={(e) => onChange(e.target.checked)}
        className="col-start-1 row-start-1 size-[14px] appearance-none border border-[#c4c4c4] bg-white"
      />
      {checked && (
        <svg viewBox="0 0 14 14" className="pointer-events-none col-start-1 row-start-1 size-[14px]" fill="none">
          <path d="m3.500 6.500 2.500 4.300 4.500-8" stroke="#000" strokeWidth="2" />
        </svg>
      )}
    </span>
  );
}

const layers = [
  { name: "hakata_train — points", kind: "point" },
  { name: "hakata_train — multilinestrings", kind: "line" },
  { name: "hakata_train — lines", kind: "line", selected: true },
  { name: "hakata_train — multipolygons", kind: "polygon" },
];

function LayerSymbol({ kind, selected }: { kind: string; selected?: boolean }) {
  if (kind === "point") {
    return (
      <span className="flex w-4 justify-center">
        <span className="size-[7px] rounded-full border border-[#7a3c55] bg-[#d4527f]" />
      </span>
    );
  }
  if (kind === "line") {
    return <span className={`h-0.5 w-[14px] ${selected ? "bg-[#ad8fc0]" : "bg-[#ea96aa]"}`} />;
  }
  return <span className="size-4 border border-[#84343a] bg-[#b84a50]" />;
}

function LayersDock() {
  const [visible, setVisible] = useState<Record<string, boolean>>({ "hakata_train — lines": true });

  return (
    <section className="flex min-h-0 flex-1 flex-col">
      <DockTitle text="レイヤ" />
      <div className="flex h-8 shrink-0 items-center gap-[9px] pl-2">
        <SmallTool label="レイヤスタイルパネルを開く">
          <path d="m9.500 8.500 4.800-5.800 1.200.8-4 7z" fill="#e4a14c" stroke="#b57427" strokeWidth=".6" />
          <path d="m5 5.500 6 3.500-1.500 3L3 9z" fill="#f3bd33" />
          <path d="m3 7.500 6 4-2 2.500-5.500-3z" fill="#e5503f" />
          <path d="m1 9.500 4.500 3.500L4 15 .500 13z" fill="#5d8cc0" />
          <path d="m6 4.500 2.500-1 3 3-1 2z" fill="#fbe58a" />
        </SmallTool>
        <SmallTool label="グループを追加">
          <path d="M4.500 3.500h9v9h-9zM1.500 6.500h8v8h-8z" fill="#f4f4f4" stroke="#777" />
          <path d="M6.500 1.500h3v9" stroke="#44607e" strokeWidth="1.200" />
          <path d="M9.500 9.500h6v6h-6z" fill="#4f9a62" />
          <path d="M12.500 10.500v4M10.500 12.500h4" stroke="#fff" />
        </SmallTool>
        <SmallTool label="地図テーマの管理">
          <path d="M.500 7.500c4-5.500 10-5.500 14 0-4 4.500-10 4.500-14 0z" fill="#fff" stroke="#999" />
          <circle cx="7.500" cy="7.300" r="3" fill="#6d98c8" stroke="#44607e" />
          <circle cx="7.500" cy="7.300" r="1.200" fill="#222" />
          <path d="M1 4.500C5 .800 10 .800 14 4.500" stroke="#aaa" />
          <path d="M11 12.500h5L13.500 15z" fill="#444" />
        </SmallTool>
        <SmallTool label="凡例をフィルタ"><Funnel16 /><path d="M11 12.500h5L13.500 15z" fill="#444" /></SmallTool>
        <SmallTool label="式で凡例をフィルタ" menu>
          <text x="0" y="9.500" fontSize="15" fontFamily="Open Sans, sans-serif" fill="#74437a">ε</text>
          <path d="M8 8.500h7v1.500L13 12v3.500h-3V12L8 10z" fill="#e0e0e0" stroke="#888" strokeWidth=".9" />
        </SmallTool>
        <SmallTool label="すべて展開"><TreeArrow16 down /></SmallTool>
        <SmallTool label="すべて折りたたむ"><TreeArrow16 /></SmallTool>
        <SmallTool label="レイヤを削除">
          <path d="M1.500 1.500h11v11h-11z" fill="#fbfbfb" stroke="#777" />
          <rect x="9" y="10" width="6.500" height="5" rx="1.500" fill="#e04040" />
          <path d="M10.500 12.500h3.500" stroke="#fff" strokeWidth="1.300" />
        </SmallTool>
      </div>
      <div className="mr-1.5 min-h-0 flex-1 border border-[#b5b5b5] bg-white">
        <ul>
          {layers.map((layer, index) => (
            <li
              key={layer.name}
              className={`flex h-[18px] items-center gap-1.5 pr-1.5 pl-[23px] whitespace-nowrap ${
                layer.selected ? "bg-[#0078d7] text-white" : "text-[#777] italic"
              }`}
            >
              <Tick
                id={`layer-${index}`}
                checked={!!visible[layer.name]}
                onChange={(value) => setVisible({ ...visible, [layer.name]: value })}
              />
              <LayerSymbol kind={layer.kind} selected={layer.selected} />
              <label htmlFor={`layer-${index}`} className={layer.selected ? "underline" : ""}>
                {layer.name}
              </label>
              {layer.selected && (
                <button type="button" aria-label="フィルタを編集" className="ml-auto bg-[#f0f4f8]">
                  <Svg size={16}>
                    <path d="M2 2.500h12v1.800L9.500 8.500v6l-3-1.500V8.500L2 4.300z" fill="#fff" stroke="#666" />
                  </Svg>
                </button>
              )}
            </li>
          ))}
          <li className="flex h-[18px] items-center gap-1.5 pl-[23px] font-semibold whitespace-nowrap text-black">
            <Svg size={16}>
              <path d="m2 14 6-11M7 2.500h7" stroke="#999" strokeDasharray="2 1" />
              <path d="M7.500 10.500c1-4 7-6 7-3s-1 6-4 7-3.500-2-3-4z" fill="#e4e4e4" stroke="#999" />
              <circle cx="2.500" cy="3.500" r="1.500" stroke="#999" />
              <path d="M12.500 1h2.500v2.500h-2.500zM1 12.500h2.500V15H1z" fill="#fff" stroke="#999" />
            </Svg>
            hakata_train — other_relations
          </li>
        </ul>
      </div>
    </section>
  );
}

/* ---------- map ---------- */

function MapCanvas() {
  return (
    <main className="min-w-0 flex-1 border border-[#b5b5b5] bg-white">
      <svg viewBox="0 0 1340 778" preserveAspectRatio="xMinYMin meet" className="size-full" fill="none" role="img" aria-label="地図">
        <path
          d="M808 368 784 377 750 417 752.500 464 757.500 489 752.500 507 726 566 720.500 590 715.500 619 735.500 658 765 686 789 707 803.500 717 825.500 738 844 751"
          stroke="#f3a6b6"
        />
        {/* hand-drawn note */}
        <g stroke="#f00" strokeWidth="5" strokeLinecap="round" strokeLinejoin="round">
          <path d="M916.500 433.500H811.500L798 440 775 447.500" />
          <path d="M793 426 778 441.500 774.500 448V453.500H817.500" />
          <path d="M963 413.500 969 415.500 986.500 430.500" />
          <path d="M961.500 473V478.500L963.500 479.500H995.500" />
          <path d="M1013.500 437V471.500L1022 468 1044.500 451 1060.500 436 1061.500 440V473.500L1064 479 1067.500 483.500H1079L1080 478" />
          <path d="M1029.500 429 1028 450 1023.500 471" />
        </g>
      </svg>
    </main>
  );
}

/* ---------- status bar ---------- */

function Spin({ id, value, label }: { id: string; value: string; label: string }) {
  return (
    <div className="flex items-center gap-1">
      <label htmlFor={id} className="w-6">{label}</label>
      <span className="flex h-[21px] w-[83px] rounded-[3px] border border-[#a6a6a6] bg-white">
        <input id={id} defaultValue={value} className="min-w-0 flex-1 pl-[3px] outline-none" />
        <span className="flex w-[14px] flex-col items-center justify-center gap-[3px] border-l border-[#b5b5b5] bg-[#f7f7f7]">
          <button type="button" aria-label={`${label} 増やす`}>
            <svg viewBox="0 0 8 5" className="h-[5px] w-2"><path d="M0 4.500h8L4 0z" fill="#5a5a5a" /></svg>
          </button>
          <button type="button" aria-label={`${label} 減らす`}><Caret /></button>
        </span>
      </span>
    </div>
  );
}

function StatusBar() {
  const [render, setRender] = useState(true);

  return (
    <footer className="flex h-7 shrink-0 items-center pl-1 font-['Liberation_Sans','Noto_Sans_CJK_JP',sans-serif] text-black">
      <div className="flex h-[22px] w-[200px] items-center rounded-[3px] border border-[#a6a6a6] bg-white pl-2">
        <svg viewBox="0 0 14 14" className="size-[14px] shrink-0" fill="none" stroke="#999" strokeWidth="1.500" aria-hidden="true">
          <circle cx="5.500" cy="5.500" r="4.300" />
          <path d="m8.800 8.800 4 4" strokeWidth="2" />
        </svg>
        <input type="search" aria-label="検索" placeholder="検索(Ctrl + K)" className="ml-1.5 min-w-0 flex-1 outline-none placeholder:text-[#7d7d7d]" />
      </div>
      <div className="ml-auto flex shrink-0 items-center">
        <label htmlFor="coords" className="w-[25px]">座標</label>
        <input id="coords" defaultValue="33.9231°  ,130.4683°" className="h-[21px] w-[117px] rounded-[3px] border border-[#a6a6a6] bg-white pl-0.5 outline-none" />
        <button type="button" aria-label="範囲とマウス位置の表示を切り替える" className="ml-1">
          <Svg size={16}>
            <circle cx="5" cy="5" r="4" fill="#ddd" stroke="#444" strokeWidth="1.300" />
            <circle cx="9.500" cy="10.500" r="4" fill="#ddd" stroke="#444" strokeWidth="1.300" />
            <path d="m2 2 9 12M1 7l6-6M8 8l7-6M10 14l2-7M13 6v2" stroke="#444" strokeWidth="1.200" />
          </Svg>
        </button>
        <label htmlFor="scale" className="ml-3.5 w-[25px]">縮尺</label>
        <span className="grid">
          <select id="scale" className="col-start-1 row-start-1 h-[21px] w-[79px] appearance-none rounded-[3px] border border-[#a6a6a6] bg-white pl-0.5 outline-none">
            <option>1:141153</option>
          </select>
          <span className="pointer-events-none col-start-1 row-start-1 mr-px flex h-[19px] w-5 items-center justify-center self-center justify-self-end border-l border-[#b5b5b5] bg-[#f7f7f7]">
            <Caret />
          </span>
        </span>
        <button type="button" aria-label="縮尺を固定" className="mr-1.5 ml-2.5">
          <Svg size={16}>
            <path d="M4 8V5.500a4 4 0 0 1 8 0V8" stroke="#888" strokeWidth="1.800" />
            <rect x="2" y="7.500" width="12" height="7.500" rx="1" fill="#686868" />
          </Svg>
        </button>
        <div className="flex gap-2">
          <Spin id="magnifier" value="100%" label="拡大" />
          <Spin id="rotation" value="0.0 °" label="回転" />
        </div>
        <div className="ml-1.5 flex items-center gap-1">
          <Tick id="render" checked={render} onChange={setRender} />
          <label htmlFor="render" className="font-feature">レンダ</label>
        </div>
        <button type="button" className="ml-4 flex items-center gap-px">
          <Svg size={16}>
            <path d="m8 1 7 7-7 7-7-7z" fill="#777" />
            <circle cx="8" cy="8" r="5.500" fill="#999" stroke="#666" />
            <path d="M1 8h14M8 1v14M3 5.500h10M3 10.500h10M5.500 3c-1.500 3-1.500 7 0 10M10.500 3c1.500 3 1.500 7 0 10" stroke="#eee" strokeWidth=".7" />
          </Svg>
          EPSG:4326
        </button>
        <button type="button" aria-label="メッセージ" className="ml-6">
          <Svg size={16}>
            <path d="M8 1.500c4.500 0 7.500 2.300 7.500 5.300 0 1.800-.8 3.200-1.800 4.200L14.500 15l-4-3c-5.500.8-10-1.500-10-5.200C.500 3.800 3.500 1.500 8 1.500z" fill="#5e5e5e" />
            <path d="M4 5.700h2v2H4zM7 5.700h2v2H7zM10 5.700h2v2h-2z" fill="#fff" />
          </Svg>
        </button>
        <svg viewBox="0 0 12 12" className="mt-2 ml-[18px] size-3" fill="#b5b5b5" aria-hidden="true">
          <path d="M9 0h1.500v1.500H9zM6 3h1.500v1.500H6zM9 3h1.500v1.500H9zM3 6h1.500v1.500H3zM6 6h1.500v1.500H6zM9 6h1.500v1.500H9zM0 9h1.500v1.500H0zM3 9h1.500v1.500H3zM6 9h1.500v1.500H6zM9 9h1.500v1.500H9z" />
        </svg>
      </div>
    </footer>
  );
}

export default function App() {
  return (
    <div className="flex h-screen flex-col border border-[#6b6567] bg-[#efefef] font-['Open_Sans','Noto_Sans_CJK_JP',sans-serif] text-xs text-[#111] [font-feature-settings:'palt']">
      {/* Title bar */}
      <header className="flex h-[30px] shrink-0 items-center bg-white pl-2 text-black">
        <Svg size={16}>
          <circle cx="7.500" cy="7.500" r="5.600" stroke="#589632" strokeWidth="3.600" />
          <path d="M7.500 7.500h4l4.500 5.500v3h-3L7.500 11z" fill="#ee7913" />
          <path d="m9 9 3.500 3.500" stroke="#f5d02b" strokeWidth="1.500" />
        </Svg>
        <h1 className="ml-1.5 flex-1">*無題のプロジェクト — QGIS</h1>
        <button type="button" aria-label="最小化" className="flex w-[46px] justify-center"><Minus className="size-3.5" strokeWidth={1.700} /></button>
        <button type="button" aria-label="最大化" className="flex w-[46px] justify-center"><Square className="size-3" strokeWidth={2.200} /></button>
        <button type="button" aria-label="閉じる" className="flex w-[46px] justify-center"><X className="size-4" strokeWidth={1.700} /></button>
      </header>

      <nav className="flex h-5 shrink-0 items-center gap-[15px] border-b border-[#d5d5d5] pl-2.5">
        {menus.map((menu) => (
          <button key={menu.key} type="button" className="whitespace-nowrap">
            {menu.text}(<u>{menu.key}</u>)
          </button>
        ))}
      </nav>

      <div className="shrink-0">
        <MainToolbar />
        <DataToolbar />
      </div>

      <div className="flex min-h-0 flex-1">
        <aside className="flex w-[293px] shrink-0 flex-col">
          <BrowserDock />
          <div className="flex h-1.5 shrink-0 justify-center pt-px">
            <span className="w-4 border-t-2 border-dotted border-[#c3c3c3]" />
          </div>
          <LayersDock />
        </aside>
        <div className="flex w-[7px] shrink-0 items-center justify-center">
          <span className="h-4 border-l-2 border-dotted border-[#c3c3c3]" />
        </div>
        <MapCanvas />
      </div>

      <StatusBar />
    </div>
  );
}
